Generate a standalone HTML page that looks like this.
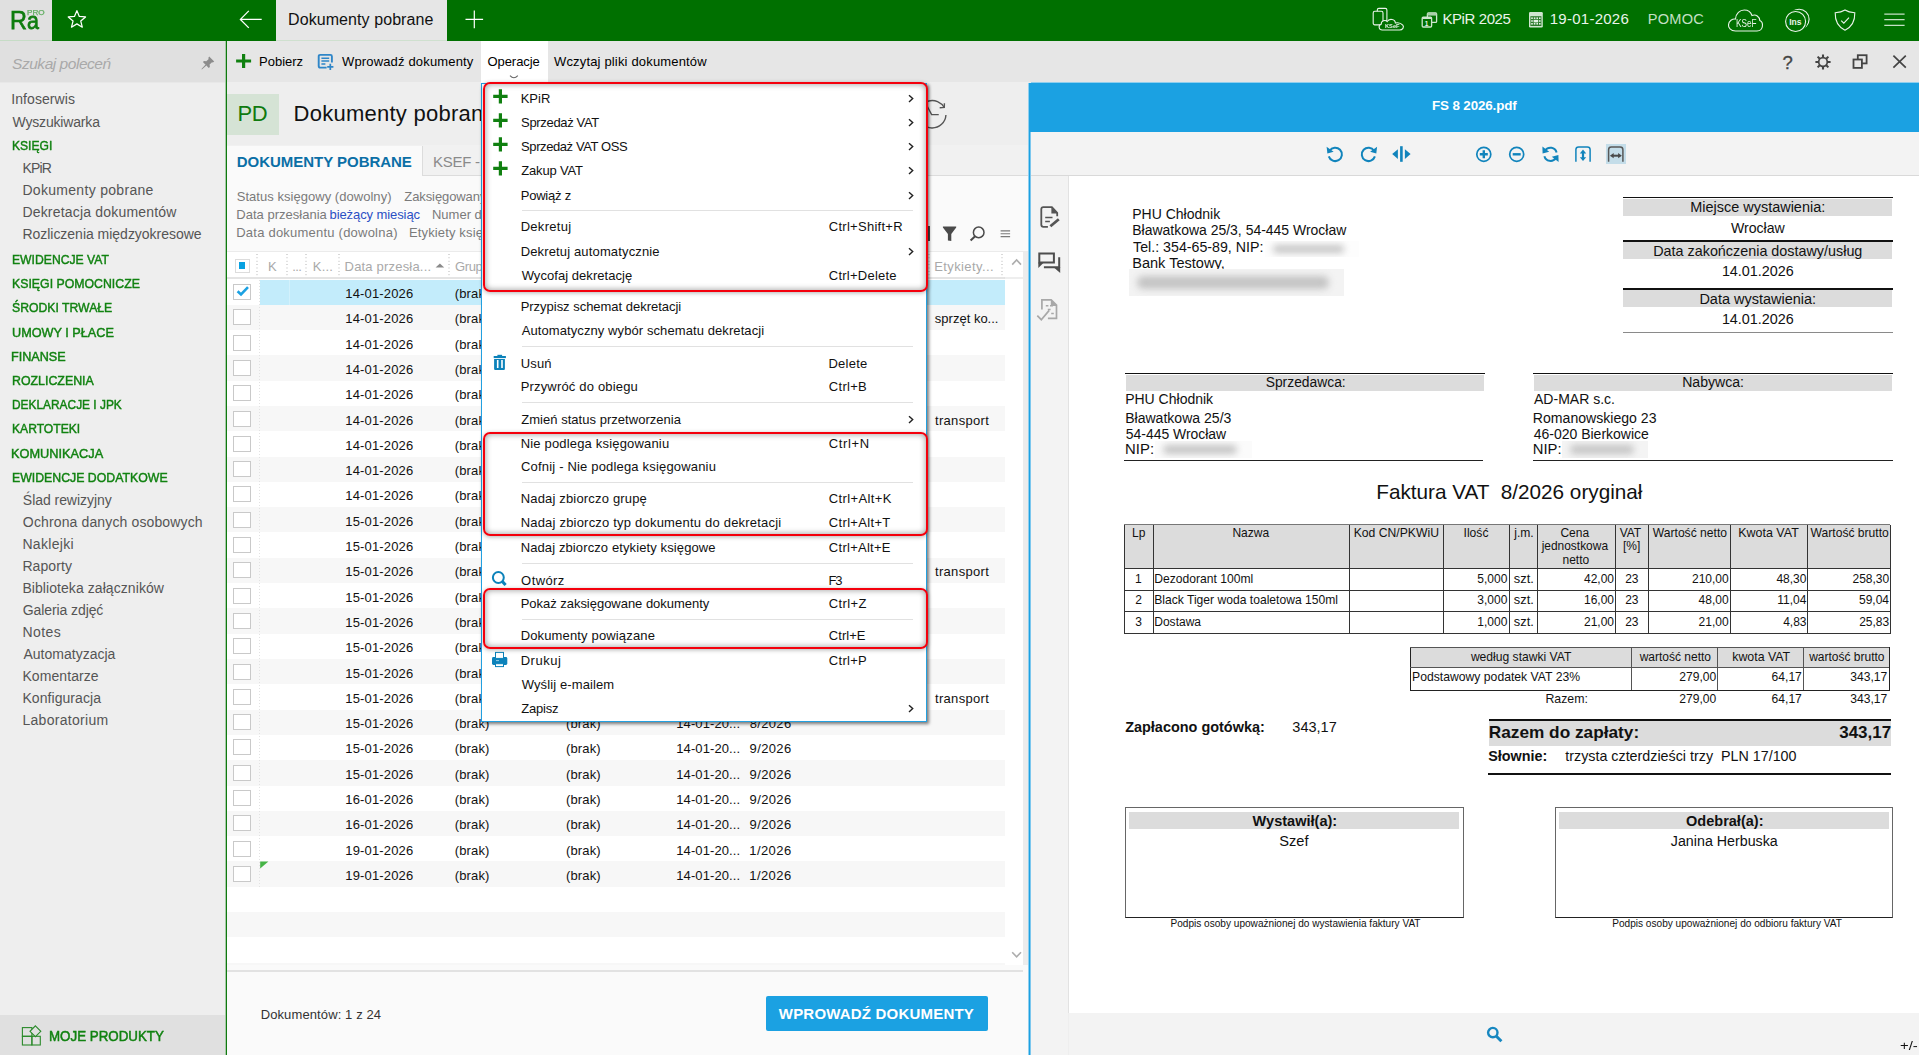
<!DOCTYPE html>
<html lang="pl"><head><meta charset="utf-8"><title>Dokumenty pobrane</title>
<style>
html,body{margin:0;padding:0;}
body{width:1919px;height:1055px;overflow:hidden;background:#eeeeee;font-family:"Liberation Sans",sans-serif;position:relative;}
.t{position:absolute;white-space:nowrap;color:#000;}
.r{position:absolute;}
svg{position:absolute;overflow:visible;}
</style></head><body>

<div class="r" style="left:0px;top:0px;width:1919px;height:41px;background:#007000;"></div>
<div class="r" style="left:0px;top:0px;width:52px;height:40px;background:#e0e0e0;"></div>
<div class="r" style="left:0px;top:40px;width:52px;height:1px;background:#c6dcc6;"></div>
<div class="r" style="left:276px;top:0px;width:171px;height:40px;background:#e6e6e6;"></div>
<div class="r" style="left:276px;top:40px;width:171px;height:1px;background:#cfe0cf;"></div>
<div class="r" style="left:0px;top:41px;width:225px;height:1014px;background:#eeeeee;"></div>
<div class="r" style="left:0px;top:41px;width:225px;height:41px;background:#e0e0e0;"></div>
<div class="r" style="left:0px;top:82px;width:225px;height:1px;background:#e8e8e8;"></div>
<div class="r" style="left:0px;top:1015px;width:225px;height:40px;background:#e0e0e0;"></div>
<div class="r" style="left:225px;top:41px;width:1px;height:1014px;background:#a5c8a5;"></div>
<div class="r" style="left:226px;top:41px;width:1px;height:1014px;background:#0f7a0f;"></div>
<div class="r" style="left:227px;top:41px;width:1692px;height:41px;background:#e6e6e6;"></div>
<div class="r" style="left:481px;top:41px;width:67px;height:42px;background:#ffffff;"></div>
<div class="r" style="left:227px;top:83px;width:803px;height:62px;background:#eeeeee;"></div>
<div class="r" style="left:227px;top:94px;width:52px;height:41px;background:#d5e3d5;"></div>
<div class="r" style="left:227px;top:145px;width:803px;height:31px;background:#f1f1f1;"></div>
<div class="r" style="left:227px;top:146px;width:196px;height:30px;background:#fafafa;"></div>
<div class="r" style="left:423px;top:175px;width:607px;height:1px;background:#dcdcdc;"></div>
<div class="r" style="left:422px;top:146px;width:1px;height:30px;background:#dcdcdc;"></div>
<div class="r" style="left:227px;top:176px;width:803px;height:77px;background:#fafafa;"></div>
<div class="r" style="left:227px;top:253px;width:778px;height:25px;background:#f4f4f4;"></div>
<div class="r" style="left:227px;top:277px;width:778px;height:2px;background:#e2e2e2;"></div>
<div class="r" style="left:227px;top:279px;width:796px;height:686px;background:#ffffff;"></div>
<div class="r" style="left:1023px;top:252px;width:5px;height:713px;background:#ececec;"></div>
<div class="r" style="left:227px;top:965px;width:803px;height:90px;background:#fafafa;"></div>
<div class="r" style="left:227px;top:970px;width:796px;height:2px;background:#e2e2e2;"></div>
<span class="t" style="left:12.07px;top:53.50px;font-size:15.5px;line-height:20px;letter-spacing:-0.468px;color:#a9a9a9;font-style:italic;">Szukaj poleceń</span>
<span class="t" style="left:11.24px;top:90.00px;font-size:14px;line-height:18px;letter-spacing:0.079px;color:#555555;">Infoserwis</span>
<span class="t" style="left:12.46px;top:113.00px;font-size:14px;line-height:18px;letter-spacing:-0.165px;color:#555555;">Wyszukiwarka</span>
<span class="t" style="left:11.53px;top:137.00px;font-size:13.4px;line-height:17px;color:#118211;-webkit-text-stroke:0.45px #118211;transform:scaleX(0.9019);transform-origin:0 0;">KSIĘGI</span>
<span class="t" style="left:22.38px;top:159.00px;font-size:14px;line-height:18px;letter-spacing:-0.795px;color:#555555;">KPiR</span>
<span class="t" style="left:22.38px;top:181.00px;font-size:14px;line-height:18px;letter-spacing:0.306px;color:#555555;">Dokumenty pobrane</span>
<span class="t" style="left:22.38px;top:203.00px;font-size:14px;line-height:18px;letter-spacing:0.195px;color:#555555;">Dekretacja dokumentów</span>
<span class="t" style="left:22.38px;top:225.00px;font-size:14px;line-height:18px;letter-spacing:-0.020px;color:#555555;">Rozliczenia międzyokresowe</span>
<span class="t" style="left:11.53px;top:251.00px;font-size:13.4px;line-height:17px;color:#118211;-webkit-text-stroke:0.45px #118211;transform:scaleX(0.9088);transform-origin:0 0;">EWIDENCJE VAT</span>
<span class="t" style="left:11.51px;top:275.00px;font-size:13.4px;line-height:17px;color:#118211;-webkit-text-stroke:0.45px #118211;transform:scaleX(0.9194);transform-origin:0 0;">KSIĘGI POMOCNICZE</span>
<span class="t" style="left:11.95px;top:299.00px;font-size:13.4px;line-height:17px;color:#118211;-webkit-text-stroke:0.45px #118211;transform:scaleX(0.9122);transform-origin:0 0;">ŚRODKI TRWAŁE</span>
<span class="t" style="left:11.55px;top:324.00px;font-size:13.4px;line-height:17px;color:#118211;-webkit-text-stroke:0.45px #118211;transform:scaleX(0.9467);transform-origin:0 0;">UMOWY I PŁACE</span>
<span class="t" style="left:11.49px;top:348.00px;font-size:13.4px;line-height:17px;color:#118211;-webkit-text-stroke:0.45px #118211;transform:scaleX(0.9425);transform-origin:0 0;">FINANSE</span>
<span class="t" style="left:11.51px;top:372.00px;font-size:13.4px;line-height:17px;color:#118211;-webkit-text-stroke:0.45px #118211;transform:scaleX(0.9234);transform-origin:0 0;">ROZLICZENIA</span>
<span class="t" style="left:11.55px;top:396.00px;font-size:13.4px;line-height:17px;color:#118211;-webkit-text-stroke:0.45px #118211;transform:scaleX(0.8888);transform-origin:0 0;">DEKLARACJE I JPK</span>
<span class="t" style="left:11.53px;top:420.00px;font-size:13.4px;line-height:17px;color:#118211;-webkit-text-stroke:0.45px #118211;transform:scaleX(0.9048);transform-origin:0 0;">KARTOTEKI</span>
<span class="t" style="left:11.48px;top:445.00px;font-size:13.4px;line-height:17px;color:#118211;-webkit-text-stroke:0.45px #118211;transform:scaleX(0.9529);transform-origin:0 0;">KOMUNIKACJA</span>
<span class="t" style="left:11.52px;top:469.00px;font-size:13.4px;line-height:17px;color:#118211;-webkit-text-stroke:0.45px #118211;transform:scaleX(0.9186);transform-origin:0 0;">EWIDENCJE DODATKOWE</span>
<span class="t" style="left:22.87px;top:491.00px;font-size:14px;line-height:18px;letter-spacing:-0.051px;color:#555555;">Ślad rewizyjny</span>
<span class="t" style="left:22.87px;top:513.00px;font-size:14px;line-height:18px;letter-spacing:0.133px;color:#555555;">Ochrona danych osobowych</span>
<span class="t" style="left:22.38px;top:535.00px;font-size:14px;line-height:18px;letter-spacing:0.319px;color:#555555;">Naklejki</span>
<span class="t" style="left:22.38px;top:557.00px;font-size:14px;line-height:18px;letter-spacing:0.098px;color:#555555;">Raporty</span>
<span class="t" style="left:22.38px;top:579.00px;font-size:14px;line-height:18px;letter-spacing:0.072px;color:#555555;">Biblioteka załączników</span>
<span class="t" style="left:22.80px;top:601.00px;font-size:14px;line-height:18px;letter-spacing:-0.095px;color:#555555;">Galeria zdjęć</span>
<span class="t" style="left:22.38px;top:623.00px;font-size:14px;line-height:18px;letter-spacing:0.459px;color:#555555;">Notes</span>
<span class="t" style="left:23.50px;top:645.00px;font-size:14px;line-height:18px;color:#555555;">Automatyzacja</span>
<span class="t" style="left:22.38px;top:667.00px;font-size:14px;line-height:18px;letter-spacing:0.084px;color:#555555;">Komentarze</span>
<span class="t" style="left:22.38px;top:689.00px;font-size:14px;line-height:18px;letter-spacing:0.071px;color:#555555;">Konfiguracja</span>
<span class="t" style="left:22.38px;top:711.00px;font-size:14px;line-height:18px;letter-spacing:0.303px;color:#555555;">Laboratorium</span>
<span class="t" style="left:48.73px;top:1027.00px;font-size:14px;line-height:18px;color:#118211;-webkit-text-stroke:0.5px #118211;transform:scaleX(0.9527);transform-origin:0 0;">MOJE PRODUKTY</span>
<span class="t" style="left:10.03px;top:3.00px;font-size:26.4px;line-height:34px;color:#0f7d0f;-webkit-text-stroke:0.75px #0f7d0f;transform:scaleX(0.8875);transform-origin:0 0;">R</span>
<span class="t" style="left:26.99px;top:6.00px;font-size:23.4px;line-height:30px;color:#0f7d0f;-webkit-text-stroke:0.8px #0f7d0f;transform:scaleX(0.9128);transform-origin:0 0;">a</span>
<span class="t" style="left:26.65px;top:8.50px;font-size:6.4px;line-height:8px;color:#62ae62;-webkit-text-stroke:0.25px #62ae62;transform:scaleX(1.2714);transform-origin:0 0;">PRO</span>
<svg style="left:67.1px;top:9.2px" width="19.8" height="19.8" viewBox="0 0 22 22"><path d="M11 1.8 L13.7 8.3 L20.6 8.8 L15.3 13.4 L17 20.2 L11 16.5 L5 20.2 L6.7 13.4 L1.4 8.8 L8.3 8.3 Z" fill="none" stroke="#fff" stroke-width="1.4" stroke-linejoin="round"/></svg>
<svg style="left:239px;top:9px" width="24" height="22" viewBox="0 0 24 22"><path d="M22.7 10.4 H1.6 M9.8 1.9 L1.4 10.4 L9.8 18.9" fill="none" stroke="#fff" stroke-width="1.3"/></svg>
<span class="t" style="left:288.02px;top:9.00px;font-size:16px;line-height:21px;letter-spacing:0.080px;color:#111;">Dokumenty pobrane</span>
<svg style="left:464px;top:9px" width="22" height="22" viewBox="0 0 22 22"><path d="M10.3 1.6 V19.2 M1.5 10.4 H19.1" fill="none" stroke="#fff" stroke-width="1.2"/></svg>
<svg style="left:1372px;top:7px" width="33" height="25" viewBox="0 0 33 25"><g fill="none" stroke="#eaf4ea" stroke-width="1.1"><rect x="5.3" y="1.4" width="9.6" height="13" rx="1.6"/><rect x="1.2" y="4.3" width="9.8" height="13.6" rx="1.6" fill="#007000"/><path d="M10.2 23 C6.6 23 6 18.2 9.2 17.2 C9 13.6 13.4 12.4 15.2 14.6 C17.2 11 23.2 12 23.4 16 C26.6 15.4 29.4 16.6 30.8 18.2 C32.4 20.2 30.6 23 27.6 23 Z" fill="#007000"/></g></svg>
<span class="t" style="left:1384.53px;top:22.00px;font-size:6px;line-height:8px;color:#eaf4ea;font-weight:bold;transform:scaleX(0.9504);transform-origin:0 0;">KSeF</span>
<svg style="left:1421px;top:11px" width="17" height="18" viewBox="0 0 17 18"><g fill="none" stroke="#cfe6cf" stroke-width="1.3"><rect x="6.4" y="2" width="9.2" height="9.4" rx="1"/><rect x="6.4" y="2" width="9.2" height="2.6" fill="#a8d0a8" stroke="none"/><rect x="1.2" y="6.2" width="9.4" height="9.8" rx="1" fill="#007000"/></g><rect x="1.2" y="6" width="9.4" height="2" fill="#cfe6cf"/></svg>
<span class="t" style="left:1424.79px;top:19.50px;font-size:6.5px;line-height:8px;color:#eaf4ea;font-weight:bold;">1</span>
<span class="t" style="left:1442.40px;top:8.50px;font-size:15px;line-height:20px;letter-spacing:-0.400px;color:#eaf4ea;">KPiR 2025</span>
<svg style="left:1528px;top:11px" width="16" height="18" viewBox="0 0 16 18"><rect x="1" y="1" width="13.8" height="15.4" rx="1.2" fill="#cfe6cf"/><rect x="2.4" y="5.2" width="11" height="9.8" fill="#2a7a2a"/><g fill="#e4f2e4"><rect x="3.2" y="6.4" width="1.6" height="1.6"/><rect x="5.8" y="6.4" width="1.6" height="1.6"/><rect x="8.4" y="6.4" width="1.6" height="1.6"/><rect x="11" y="6.4" width="1.6" height="1.6"/><rect x="3.2" y="9.2" width="1.6" height="1.6"/><rect x="5.6" y="8.8" width="4.6" height="2.6"/><rect x="11" y="9.2" width="1.6" height="1.6"/><rect x="3.2" y="12" width="1.6" height="1.6"/><rect x="5.8" y="12" width="1.6" height="1.6"/><rect x="8.4" y="12" width="1.6" height="1.6"/><rect x="11" y="12" width="1.6" height="1.6"/></g></svg>
<span class="t" style="left:1549.67px;top:8.50px;font-size:15px;line-height:20px;letter-spacing:0.271px;color:#eaf4ea;">19-01-2026</span>
<span class="t" style="left:1647.83px;top:9.50px;font-size:14.6px;line-height:19px;letter-spacing:0.191px;color:#c4e0c4;">POMOC</span>
<svg style="left:1727px;top:8px" width="38" height="25" viewBox="0 0 38 25"><path d="M8.5 23 C3.5 23 1.2 19.5 1.5 16.8 C1.8 13 5.5 10.5 8.5 11 C8.8 5.5 13 2 17.2 2 C21 2 24 4.5 25 7.5 C29 6 32.5 8.5 32.8 12.5 C36.5 14 37 22.8 30 23 Z" fill="none" stroke="#eaf4ea" stroke-width="1.1"/></svg>
<span class="t" style="left:1736.04px;top:16.00px;font-size:10.6px;line-height:14px;color:#eaf4ea;transform:scaleX(0.7761);transform-origin:0 0;">KSeF</span>
<svg style="left:1784px;top:7px" width="28" height="27" viewBox="0 0 28 27"><g fill="none" stroke="#eaf4ea" stroke-width="1.1"><circle cx="15.1" cy="12.2" r="10"/><circle cx="11.6" cy="14.5" r="10" fill="#007000" stroke="#007000" stroke-width="3.2"/><circle cx="11.6" cy="14.5" r="10"/></g></svg>
<span class="t" style="left:1789.25px;top:16.50px;font-size:8.5px;line-height:11px;letter-spacing:-0.045px;color:#eaf4ea;font-weight:bold;">Ins</span>
<svg style="left:1833px;top:8px" width="24" height="24" viewBox="0 0 24 24"><g fill="none" stroke="#eaf4ea" stroke-width="1.1"><path d="M12 2 C9 4 5.4 4.6 2.2 4.8 C2 12 4.4 18.6 12 22.2 C19.6 18.6 22 12 21.8 4.8 C18.6 4.6 15 4 12 2 Z"/><path d="M8.2 12.6 L10.8 15.2 L16 9.6"/></g></svg>
<svg style="left:1884px;top:12px" width="22" height="16" viewBox="0 0 22 16"><path d="M0.3 2.1 H20.6 M0.3 7.7 H20.6 M0.3 13.4 H20.6" stroke="#c4e0c4" stroke-width="1.3" fill="none"/></svg>
<svg style="left:201px;top:56px" width="14" height="14" viewBox="0 0 14 14"><g fill="#8c8c8c"><path d="M8.2 0.6 L13.2 5.6 L11.9 6.6 L11 6.2 L8.6 8.6 L8.9 10.9 L7.8 12 L1.9 6.1 L3 5 L5.3 5.3 L7.7 2.9 L7.3 2 Z"/><path d="M4.6 8.6 L5.4 9.4 L0.9 13.4 L0.5 13 Z"/></g></svg>
<svg style="left:21px;top:1025px" width="22" height="22" viewBox="0 0 22 22"><g fill="none" stroke="#2a8a2a" stroke-width="1.1"><rect x="1.4" y="2.6" width="9.5" height="8.7"/><rect x="1.4" y="11.3" width="9.5" height="8.7"/><rect x="10.9" y="11.3" width="8.4" height="8.7"/><path d="M14.4 0.9 L19.8 6.3 L14.4 11.7 L9 6.3 Z" fill="#e0e0e0"/></g></svg>
<svg style="left:236px;top:54px" width="16" height="15" viewBox="0 0 16 15"><path d="M7.6 0 V14 M0.1 7 H15.1" stroke="#108010" stroke-width="3.2" fill="none"/></svg>
<span class="t" style="left:258.96px;top:53.00px;font-size:13px;line-height:17px;letter-spacing:0.015px;">Pobierz</span>
<svg style="left:317px;top:53px" width="18" height="18" viewBox="0 0 18 18"><g fill="none" stroke="#2f86c8" stroke-width="1.9"><path d="M9.6 14.6 H3.2 Q1.7 14.6 1.7 13.1 V3.4 Q1.7 1.9 3.2 1.9 H13.4 Q14.9 1.9 14.9 3.4 V9.4"/><path d="M4.4 5.3 H12.2 M4.4 8.1 H12.2 M4.4 10.9 H8.4" stroke-width="1.5"/><path d="M13.3 10.8 V17 M10.2 13.9 H16.4" stroke-width="1.7"/></g></svg>
<span class="t" style="left:341.97px;top:53.00px;font-size:13px;line-height:17px;letter-spacing:0.161px;">Wprowadź dokumenty</span>
<span class="t" style="left:487.42px;top:53.00px;font-size:13px;line-height:17px;letter-spacing:-0.044px;">Operacje</span>
<svg style="left:509px;top:74.6px" width="10" height="5" viewBox="0 0 10 5"><path d="M1 0.6 Q4.9 4.8 8.8 0.6" fill="none" stroke="#666" stroke-width="1.1"/></svg>
<span class="t" style="left:553.97px;top:53.00px;font-size:13px;line-height:17px;letter-spacing:0.167px;">Wczytaj pliki dokumentów</span>
<span class="t" style="left:1782.56px;top:50.50px;font-size:18.5px;line-height:24px;color:#444;-webkit-text-stroke:0.3px #444;">?</span>
<svg style="left:1813.7px;top:52.6px" width="18" height="18" viewBox="0 0 18 18"><circle cx="9" cy="9" r="4.3" fill="none" stroke="#444" stroke-width="1.7"/><path d="M9.00 13.60 L9.00 16.60 M5.75 12.25 L3.63 14.37 M4.40 9.00 L1.40 9.00 M5.75 5.75 L3.63 3.63 M9.00 4.40 L9.00 1.40 M12.25 5.75 L14.37 3.63 M13.60 9.00 L16.60 9.00 M12.25 12.25 L14.37 14.37 " stroke="#444" stroke-width="2.1" fill="none"/></svg>
<svg style="left:1852px;top:54px" width="17" height="16" viewBox="0 0 17 16"><g fill="none" stroke="#444" stroke-width="1.8"><rect x="5.8" y="1.2" width="8.8" height="8.2"/><rect x="1.5" y="5.5" width="8.4" height="8.4" fill="#e6e6e6"/></g></svg>
<svg style="left:1892px;top:54px" width="16" height="16" viewBox="0 0 16 16"><path d="M1.4 1.6 L13.8 13.6 M13.8 1.6 L1.4 13.6" stroke="#444" stroke-width="1.7" fill="none"/></svg>
<span class="t" style="left:237.54px;top:99.00px;font-size:22px;line-height:29px;letter-spacing:-0.375px;color:#0f7a0f;">PD</span>
<span class="t" style="left:293.54px;top:99.00px;font-size:22px;line-height:29px;letter-spacing:0.255px;color:#111;">Dokumenty pobrane</span>
<svg style="left:915px;top:88px" width="34" height="44" viewBox="0 0 34 44"><g fill="none" stroke="#555" stroke-width="1.4"><path d="M3.45 26.25 A13.75 13.75 0 0 1 29.17 19.48"/><path d="M30.93 26.97 A13.75 13.75 0 0 1 3.45 26.25"/><path d="M24.7 19.7 L29.3 19.4 L29.4 15.3"/><path d="M23.75 26.6 H16.6 L12.5 18.75"/></g></svg>
<span class="t" style="left:236.72px;top:151.50px;font-size:15px;line-height:20px;letter-spacing:-0.027px;color:#0b6fa6;font-weight:bold;">DOKUMENTY POBRANE</span>
<span class="t" style="left:433.10px;top:151.50px;font-size:15px;line-height:20px;letter-spacing:-0.286px;color:#8a8a8a;">KSEF - pobrane</span>
<span class="t" style="left:236.72px;top:188.00px;font-size:13px;line-height:17px;letter-spacing:0.037px;color:#7a7a7a;">Status księgowy (dowolny)</span>
<span class="t" style="left:404.31px;top:188.00px;font-size:13px;line-height:17px;letter-spacing:-0.090px;color:#7a7a7a;">Zaksięgowany (dowolny)</span>
<span class="t" style="left:236.26px;top:206.00px;font-size:13px;line-height:17px;letter-spacing:0.014px;color:#7a7a7a;">Data przesłania</span>
<span class="t" style="left:329.49px;top:206.00px;font-size:13px;line-height:17px;letter-spacing:-0.086px;color:#2a4fc4;">bieżący miesiąc</span>
<span class="t" style="left:431.96px;top:206.00px;font-size:13px;line-height:17px;color:#7a7a7a;">Numer dokumentu</span>
<span class="t" style="left:236.26px;top:224.00px;font-size:13px;line-height:17px;letter-spacing:0.223px;color:#7a7a7a;">Data dokumentu (dowolna)</span>
<span class="t" style="left:408.96px;top:224.00px;font-size:13px;line-height:17px;letter-spacing:0.142px;color:#7a7a7a;">Etykiety księgowe</span>
<div class="r" style="left:227px;top:251px;width:803px;height:1px;background:#ebebeb;"></div>
<div class="r" style="left:227px;top:252px;width:796px;height:25px;background:#ffffff;"></div>
<div class="r" style="left:227px;top:277px;width:777px;height:2px;background:#e4e4e4;"></div>
<div class="r" style="left:235px;top:259px;width:13px;height:12px;background:#ffffff;border:1px solid #dcdcdc;box-sizing:content-box;"></div>
<div class="r" style="left:239px;top:262px;width:6px;height:7px;background:#08a1e1;"></div>
<div class="r" style="left:256px;top:254px;width:2px;height:22px;background-image:linear-gradient(#d4d4d4 1px,transparent 1px);background-size:2px 3.4px;"></div>
<div class="r" style="left:286px;top:254px;width:2px;height:22px;background-image:linear-gradient(#d4d4d4 1px,transparent 1px);background-size:2px 3.4px;"></div>
<div class="r" style="left:305px;top:254px;width:2px;height:22px;background-image:linear-gradient(#d4d4d4 1px,transparent 1px);background-size:2px 3.4px;"></div>
<div class="r" style="left:338px;top:254px;width:2px;height:22px;background-image:linear-gradient(#d4d4d4 1px,transparent 1px);background-size:2px 3.4px;"></div>
<div class="r" style="left:448px;top:254px;width:2px;height:22px;background-image:linear-gradient(#d4d4d4 1px,transparent 1px);background-size:2px 3.4px;"></div>
<div class="r" style="left:928px;top:254px;width:2px;height:22px;background-image:linear-gradient(#d4d4d4 1px,transparent 1px);background-size:2px 3.4px;"></div>
<div class="r" style="left:1001px;top:254px;width:2px;height:22px;background-image:linear-gradient(#d4d4d4 1px,transparent 1px);background-size:2px 3.4px;"></div>
<span class="t" style="left:267.96px;top:258.00px;font-size:13px;line-height:17px;color:#a9a9a9;">K</span>
<span class="t" style="left:292.13px;top:258.00px;font-size:13px;line-height:17px;letter-spacing:-0.491px;color:#a9a9a9;">...</span>
<span class="t" style="left:312.76px;top:258.00px;font-size:13px;line-height:17px;letter-spacing:0.237px;color:#a9a9a9;">K...</span>
<span class="t" style="left:344.56px;top:258.00px;font-size:13px;line-height:17px;letter-spacing:0.192px;color:#a9a9a9;">Data przesła...</span>
<svg style="left:435px;top:263px" width="10" height="5" viewBox="0 0 10 5"><path d="M0.6 4.6 L4.9 0.4 L9.2 4.6 Z" fill="#8a8a8a"/></svg>
<span class="t" style="left:454.95px;top:258.00px;font-size:13px;line-height:17px;letter-spacing:-0.373px;color:#a9a9a9;">Grupa</span>
<span class="t" style="left:566.54px;top:258.00px;font-size:13px;line-height:17px;letter-spacing:-0.325px;color:#a9a9a9;">Typ dok...</span>
<span class="t" style="left:676.16px;top:258.00px;font-size:13px;line-height:17px;letter-spacing:-0.265px;color:#a9a9a9;">Data dok...</span>
<span class="t" style="left:749.16px;top:258.00px;font-size:13px;line-height:17px;letter-spacing:0.059px;color:#a9a9a9;">Numer</span>
<span class="t" style="left:934.16px;top:258.00px;font-size:13px;line-height:17px;letter-spacing:0.403px;color:#a9a9a9;">Etykiety...</span>
<svg style="left:1011px;top:258px" width="12" height="8" viewBox="0 0 12 8"><path d="M1.2 6.6 L5.6 1.9 L10 6.6" fill="none" stroke="#adadad" stroke-width="1.6"/></svg>
<svg style="left:1011px;top:951px" width="12" height="8" viewBox="0 0 12 8"><path d="M1.2 1.2 L5.6 5.9 L10 1.2" fill="none" stroke="#adadad" stroke-width="1.6"/></svg>
<div class="r" style="left:260px;top:280px;width:745px;height:25px;background:#c3ecfb;"></div>
<div class="r" style="left:289px;top:280px;width:1px;height:25px;background:#d3f1fc;"></div>
<div class="r" style="left:233px;top:284px;width:16px;height:14px;background:#ffffff;border:1px solid #c9c9c9;"></div>
<span class="t" style="left:345.32px;top:285.00px;font-size:13px;line-height:17px;letter-spacing:0.159px;color:#111;">14-01-2026</span>
<span class="t" style="left:454.82px;top:285.00px;font-size:13px;line-height:17px;letter-spacing:0.126px;color:#111;">(brak)</span>
<span class="t" style="left:566.02px;top:285.00px;font-size:13px;line-height:17px;letter-spacing:0.126px;color:#111;">(brak)</span>
<span class="t" style="left:676.23px;top:285.00px;font-size:13px;line-height:17px;letter-spacing:0.106px;color:#111;">14-01-20...</span>
<span class="t" style="left:749.23px;top:285.00px;font-size:13px;line-height:17px;letter-spacing:0.436px;color:#111;">1/2026</span>
<div class="r" style="left:227px;top:305px;width:778px;height:25px;background:#f7f7f7;"></div>
<div class="r" style="left:233px;top:309px;width:16px;height:14px;background:#ffffff;border:1px solid #c9c9c9;"></div>
<span class="t" style="left:345.32px;top:310.00px;font-size:13px;line-height:17px;letter-spacing:0.159px;color:#111;">14-01-2026</span>
<span class="t" style="left:454.82px;top:310.00px;font-size:13px;line-height:17px;letter-spacing:0.126px;color:#111;">(brak)</span>
<span class="t" style="left:566.02px;top:310.00px;font-size:13px;line-height:17px;letter-spacing:0.126px;color:#111;">(brak)</span>
<span class="t" style="left:676.23px;top:310.00px;font-size:13px;line-height:17px;letter-spacing:0.106px;color:#111;">14-01-20...</span>
<span class="t" style="left:749.55px;top:310.00px;font-size:13px;line-height:17px;letter-spacing:0.371px;color:#111;">2/2026</span>
<span class="t" style="left:934.84px;top:310.00px;font-size:13px;line-height:17px;letter-spacing:0.005px;color:#111;">sprzęt ko...</span>
<div class="r" style="left:233px;top:335px;width:16px;height:14px;background:#ffffff;border:1px solid #c9c9c9;"></div>
<span class="t" style="left:345.32px;top:336.00px;font-size:13px;line-height:17px;letter-spacing:0.159px;color:#111;">14-01-2026</span>
<span class="t" style="left:454.82px;top:336.00px;font-size:13px;line-height:17px;letter-spacing:0.126px;color:#111;">(brak)</span>
<span class="t" style="left:566.02px;top:336.00px;font-size:13px;line-height:17px;letter-spacing:0.126px;color:#111;">(brak)</span>
<span class="t" style="left:676.23px;top:336.00px;font-size:13px;line-height:17px;letter-spacing:0.106px;color:#111;">14-01-20...</span>
<span class="t" style="left:749.71px;top:336.00px;font-size:13px;line-height:17px;letter-spacing:0.338px;color:#111;">3/2026</span>
<div class="r" style="left:227px;top:355px;width:778px;height:26px;background:#f7f7f7;"></div>
<div class="r" style="left:233px;top:360px;width:16px;height:14px;background:#ffffff;border:1px solid #c9c9c9;"></div>
<span class="t" style="left:345.32px;top:361.00px;font-size:13px;line-height:17px;letter-spacing:0.159px;color:#111;">14-01-2026</span>
<span class="t" style="left:454.82px;top:361.00px;font-size:13px;line-height:17px;letter-spacing:0.126px;color:#111;">(brak)</span>
<span class="t" style="left:566.02px;top:361.00px;font-size:13px;line-height:17px;letter-spacing:0.126px;color:#111;">(brak)</span>
<span class="t" style="left:676.23px;top:361.00px;font-size:13px;line-height:17px;letter-spacing:0.106px;color:#111;">14-01-20...</span>
<span class="t" style="left:749.71px;top:361.00px;font-size:13px;line-height:17px;letter-spacing:0.338px;color:#111;">3/2026</span>
<div class="r" style="left:233px;top:385px;width:16px;height:14px;background:#ffffff;border:1px solid #c9c9c9;"></div>
<span class="t" style="left:345.32px;top:386.00px;font-size:13px;line-height:17px;letter-spacing:0.159px;color:#111;">14-01-2026</span>
<span class="t" style="left:454.82px;top:386.00px;font-size:13px;line-height:17px;letter-spacing:0.126px;color:#111;">(brak)</span>
<span class="t" style="left:566.02px;top:386.00px;font-size:13px;line-height:17px;letter-spacing:0.126px;color:#111;">(brak)</span>
<span class="t" style="left:676.23px;top:386.00px;font-size:13px;line-height:17px;letter-spacing:0.106px;color:#111;">14-01-20...</span>
<span class="t" style="left:749.91px;top:386.00px;font-size:13px;line-height:17px;letter-spacing:0.299px;color:#111;">4/2026</span>
<div class="r" style="left:227px;top:406px;width:778px;height:25px;background:#f7f7f7;"></div>
<div class="r" style="left:233px;top:411px;width:16px;height:14px;background:#ffffff;border:1px solid #c9c9c9;"></div>
<span class="t" style="left:345.32px;top:412.00px;font-size:13px;line-height:17px;letter-spacing:0.159px;color:#111;">14-01-2026</span>
<span class="t" style="left:454.82px;top:412.00px;font-size:13px;line-height:17px;letter-spacing:0.126px;color:#111;">(brak)</span>
<span class="t" style="left:566.02px;top:412.00px;font-size:13px;line-height:17px;letter-spacing:0.126px;color:#111;">(brak)</span>
<span class="t" style="left:676.23px;top:412.00px;font-size:13px;line-height:17px;letter-spacing:0.106px;color:#111;">14-01-20...</span>
<span class="t" style="left:749.68px;top:412.00px;font-size:13px;line-height:17px;letter-spacing:0.345px;color:#111;">5/2026</span>
<span class="t" style="left:935.00px;top:412.00px;font-size:13px;line-height:17px;letter-spacing:0.309px;color:#111;">transport</span>
<div class="r" style="left:233px;top:436px;width:16px;height:14px;background:#ffffff;border:1px solid #c9c9c9;"></div>
<span class="t" style="left:345.32px;top:437.00px;font-size:13px;line-height:17px;letter-spacing:0.159px;color:#111;">14-01-2026</span>
<span class="t" style="left:454.82px;top:437.00px;font-size:13px;line-height:17px;letter-spacing:0.126px;color:#111;">(brak)</span>
<span class="t" style="left:566.02px;top:437.00px;font-size:13px;line-height:17px;letter-spacing:0.126px;color:#111;">(brak)</span>
<span class="t" style="left:676.23px;top:437.00px;font-size:13px;line-height:17px;letter-spacing:0.106px;color:#111;">14-01-20...</span>
<span class="t" style="left:749.68px;top:437.00px;font-size:13px;line-height:17px;letter-spacing:0.345px;color:#111;">5/2026</span>
<div class="r" style="left:227px;top:457px;width:778px;height:25px;background:#f7f7f7;"></div>
<div class="r" style="left:233px;top:461px;width:16px;height:14px;background:#ffffff;border:1px solid #c9c9c9;"></div>
<span class="t" style="left:345.32px;top:462.00px;font-size:13px;line-height:17px;letter-spacing:0.159px;color:#111;">14-01-2026</span>
<span class="t" style="left:454.82px;top:462.00px;font-size:13px;line-height:17px;letter-spacing:0.126px;color:#111;">(brak)</span>
<span class="t" style="left:566.02px;top:462.00px;font-size:13px;line-height:17px;letter-spacing:0.126px;color:#111;">(brak)</span>
<span class="t" style="left:676.23px;top:462.00px;font-size:13px;line-height:17px;letter-spacing:0.106px;color:#111;">14-01-20...</span>
<span class="t" style="left:749.55px;top:462.00px;font-size:13px;line-height:17px;letter-spacing:0.371px;color:#111;">6/2026</span>
<div class="r" style="left:233px;top:486px;width:16px;height:14px;background:#ffffff;border:1px solid #c9c9c9;"></div>
<span class="t" style="left:345.32px;top:487.00px;font-size:13px;line-height:17px;letter-spacing:0.159px;color:#111;">14-01-2026</span>
<span class="t" style="left:454.82px;top:487.00px;font-size:13px;line-height:17px;letter-spacing:0.126px;color:#111;">(brak)</span>
<span class="t" style="left:566.02px;top:487.00px;font-size:13px;line-height:17px;letter-spacing:0.126px;color:#111;">(brak)</span>
<span class="t" style="left:676.23px;top:487.00px;font-size:13px;line-height:17px;letter-spacing:0.106px;color:#111;">14-01-20...</span>
<span class="t" style="left:749.55px;top:487.00px;font-size:13px;line-height:17px;letter-spacing:0.371px;color:#111;">6/2026</span>
<div class="r" style="left:227px;top:507px;width:778px;height:25px;background:#f7f7f7;"></div>
<div class="r" style="left:233px;top:512px;width:16px;height:14px;background:#ffffff;border:1px solid #c9c9c9;"></div>
<span class="t" style="left:345.32px;top:513.00px;font-size:13px;line-height:17px;letter-spacing:0.159px;color:#111;">15-01-2026</span>
<span class="t" style="left:454.82px;top:513.00px;font-size:13px;line-height:17px;letter-spacing:0.126px;color:#111;">(brak)</span>
<span class="t" style="left:566.02px;top:513.00px;font-size:13px;line-height:17px;letter-spacing:0.126px;color:#111;">(brak)</span>
<span class="t" style="left:676.23px;top:513.00px;font-size:13px;line-height:17px;letter-spacing:0.106px;color:#111;">14-01-20...</span>
<span class="t" style="left:749.55px;top:513.00px;font-size:13px;line-height:17px;letter-spacing:0.371px;color:#111;">7/2026</span>
<div class="r" style="left:233px;top:537px;width:16px;height:14px;background:#ffffff;border:1px solid #c9c9c9;"></div>
<span class="t" style="left:345.32px;top:538.00px;font-size:13px;line-height:17px;letter-spacing:0.159px;color:#111;">15-01-2026</span>
<span class="t" style="left:454.82px;top:538.00px;font-size:13px;line-height:17px;letter-spacing:0.126px;color:#111;">(brak)</span>
<span class="t" style="left:566.02px;top:538.00px;font-size:13px;line-height:17px;letter-spacing:0.126px;color:#111;">(brak)</span>
<span class="t" style="left:676.23px;top:538.00px;font-size:13px;line-height:17px;letter-spacing:0.106px;color:#111;">14-01-20...</span>
<span class="t" style="left:749.55px;top:538.00px;font-size:13px;line-height:17px;letter-spacing:0.371px;color:#111;">7/2026</span>
<div class="r" style="left:227px;top:558px;width:778px;height:25px;background:#f7f7f7;"></div>
<div class="r" style="left:233px;top:562px;width:16px;height:14px;background:#ffffff;border:1px solid #c9c9c9;"></div>
<span class="t" style="left:345.32px;top:563.00px;font-size:13px;line-height:17px;letter-spacing:0.159px;color:#111;">15-01-2026</span>
<span class="t" style="left:454.82px;top:563.00px;font-size:13px;line-height:17px;letter-spacing:0.126px;color:#111;">(brak)</span>
<span class="t" style="left:566.02px;top:563.00px;font-size:13px;line-height:17px;letter-spacing:0.126px;color:#111;">(brak)</span>
<span class="t" style="left:676.23px;top:563.00px;font-size:13px;line-height:17px;letter-spacing:0.106px;color:#111;">14-01-20...</span>
<span class="t" style="left:749.55px;top:563.00px;font-size:13px;line-height:17px;letter-spacing:0.371px;color:#111;">7/2026</span>
<span class="t" style="left:935.00px;top:563.00px;font-size:13px;line-height:17px;letter-spacing:0.309px;color:#111;">transport</span>
<div class="r" style="left:233px;top:588px;width:16px;height:14px;background:#ffffff;border:1px solid #c9c9c9;"></div>
<span class="t" style="left:345.32px;top:589.00px;font-size:13px;line-height:17px;letter-spacing:0.159px;color:#111;">15-01-2026</span>
<span class="t" style="left:454.82px;top:589.00px;font-size:13px;line-height:17px;letter-spacing:0.126px;color:#111;">(brak)</span>
<span class="t" style="left:566.02px;top:589.00px;font-size:13px;line-height:17px;letter-spacing:0.126px;color:#111;">(brak)</span>
<span class="t" style="left:676.23px;top:589.00px;font-size:13px;line-height:17px;letter-spacing:0.106px;color:#111;">14-01-20...</span>
<span class="t" style="left:749.65px;top:589.00px;font-size:13px;line-height:17px;letter-spacing:0.352px;color:#111;">8/2026</span>
<div class="r" style="left:227px;top:608px;width:778px;height:26px;background:#f7f7f7;"></div>
<div class="r" style="left:233px;top:613px;width:16px;height:14px;background:#ffffff;border:1px solid #c9c9c9;"></div>
<span class="t" style="left:345.32px;top:614.00px;font-size:13px;line-height:17px;letter-spacing:0.159px;color:#111;">15-01-2026</span>
<span class="t" style="left:454.82px;top:614.00px;font-size:13px;line-height:17px;letter-spacing:0.126px;color:#111;">(brak)</span>
<span class="t" style="left:566.02px;top:614.00px;font-size:13px;line-height:17px;letter-spacing:0.126px;color:#111;">(brak)</span>
<span class="t" style="left:676.23px;top:614.00px;font-size:13px;line-height:17px;letter-spacing:0.106px;color:#111;">14-01-20...</span>
<span class="t" style="left:749.65px;top:614.00px;font-size:13px;line-height:17px;letter-spacing:0.352px;color:#111;">8/2026</span>
<div class="r" style="left:233px;top:638px;width:16px;height:14px;background:#ffffff;border:1px solid #c9c9c9;"></div>
<span class="t" style="left:345.32px;top:639.00px;font-size:13px;line-height:17px;letter-spacing:0.159px;color:#111;">15-01-2026</span>
<span class="t" style="left:454.82px;top:639.00px;font-size:13px;line-height:17px;letter-spacing:0.126px;color:#111;">(brak)</span>
<span class="t" style="left:566.02px;top:639.00px;font-size:13px;line-height:17px;letter-spacing:0.126px;color:#111;">(brak)</span>
<span class="t" style="left:676.23px;top:639.00px;font-size:13px;line-height:17px;letter-spacing:0.106px;color:#111;">14-01-20...</span>
<span class="t" style="left:749.65px;top:639.00px;font-size:13px;line-height:17px;letter-spacing:0.352px;color:#111;">8/2026</span>
<div class="r" style="left:227px;top:659px;width:778px;height:25px;background:#f7f7f7;"></div>
<div class="r" style="left:233px;top:664px;width:16px;height:14px;background:#ffffff;border:1px solid #c9c9c9;"></div>
<span class="t" style="left:345.32px;top:665.00px;font-size:13px;line-height:17px;letter-spacing:0.159px;color:#111;">15-01-2026</span>
<span class="t" style="left:454.82px;top:665.00px;font-size:13px;line-height:17px;letter-spacing:0.126px;color:#111;">(brak)</span>
<span class="t" style="left:566.02px;top:665.00px;font-size:13px;line-height:17px;letter-spacing:0.126px;color:#111;">(brak)</span>
<span class="t" style="left:676.23px;top:665.00px;font-size:13px;line-height:17px;letter-spacing:0.106px;color:#111;">14-01-20...</span>
<span class="t" style="left:749.65px;top:665.00px;font-size:13px;line-height:17px;letter-spacing:0.352px;color:#111;">8/2026</span>
<div class="r" style="left:233px;top:689px;width:16px;height:14px;background:#ffffff;border:1px solid #c9c9c9;"></div>
<span class="t" style="left:345.32px;top:690.00px;font-size:13px;line-height:17px;letter-spacing:0.159px;color:#111;">15-01-2026</span>
<span class="t" style="left:454.82px;top:690.00px;font-size:13px;line-height:17px;letter-spacing:0.126px;color:#111;">(brak)</span>
<span class="t" style="left:566.02px;top:690.00px;font-size:13px;line-height:17px;letter-spacing:0.126px;color:#111;">(brak)</span>
<span class="t" style="left:676.23px;top:690.00px;font-size:13px;line-height:17px;letter-spacing:0.106px;color:#111;">14-01-20...</span>
<span class="t" style="left:749.65px;top:690.00px;font-size:13px;line-height:17px;letter-spacing:0.352px;color:#111;">8/2026</span>
<span class="t" style="left:935.00px;top:690.00px;font-size:13px;line-height:17px;letter-spacing:0.309px;color:#111;">transport</span>
<div class="r" style="left:227px;top:710px;width:778px;height:25px;background:#f7f7f7;"></div>
<div class="r" style="left:233px;top:714px;width:16px;height:14px;background:#ffffff;border:1px solid #c9c9c9;"></div>
<span class="t" style="left:345.32px;top:715.00px;font-size:13px;line-height:17px;letter-spacing:0.159px;color:#111;">15-01-2026</span>
<span class="t" style="left:454.82px;top:715.00px;font-size:13px;line-height:17px;letter-spacing:0.126px;color:#111;">(brak)</span>
<span class="t" style="left:566.02px;top:715.00px;font-size:13px;line-height:17px;letter-spacing:0.126px;color:#111;">(brak)</span>
<span class="t" style="left:676.23px;top:715.00px;font-size:13px;line-height:17px;letter-spacing:0.106px;color:#111;">14-01-20...</span>
<span class="t" style="left:749.65px;top:715.00px;font-size:13px;line-height:17px;letter-spacing:0.352px;color:#111;">8/2026</span>
<div class="r" style="left:233px;top:739px;width:16px;height:14px;background:#ffffff;border:1px solid #c9c9c9;"></div>
<span class="t" style="left:345.32px;top:740.00px;font-size:13px;line-height:17px;letter-spacing:0.159px;color:#111;">15-01-2026</span>
<span class="t" style="left:454.82px;top:740.00px;font-size:13px;line-height:17px;letter-spacing:0.126px;color:#111;">(brak)</span>
<span class="t" style="left:566.02px;top:740.00px;font-size:13px;line-height:17px;letter-spacing:0.126px;color:#111;">(brak)</span>
<span class="t" style="left:676.23px;top:740.00px;font-size:13px;line-height:17px;letter-spacing:0.106px;color:#111;">14-01-20...</span>
<span class="t" style="left:749.62px;top:740.00px;font-size:13px;line-height:17px;letter-spacing:0.358px;color:#111;">9/2026</span>
<div class="r" style="left:227px;top:760px;width:778px;height:26px;background:#f7f7f7;"></div>
<div class="r" style="left:233px;top:765px;width:16px;height:14px;background:#ffffff;border:1px solid #c9c9c9;"></div>
<span class="t" style="left:345.32px;top:766.00px;font-size:13px;line-height:17px;letter-spacing:0.159px;color:#111;">15-01-2026</span>
<span class="t" style="left:454.82px;top:766.00px;font-size:13px;line-height:17px;letter-spacing:0.126px;color:#111;">(brak)</span>
<span class="t" style="left:566.02px;top:766.00px;font-size:13px;line-height:17px;letter-spacing:0.126px;color:#111;">(brak)</span>
<span class="t" style="left:676.23px;top:766.00px;font-size:13px;line-height:17px;letter-spacing:0.106px;color:#111;">14-01-20...</span>
<span class="t" style="left:749.62px;top:766.00px;font-size:13px;line-height:17px;letter-spacing:0.358px;color:#111;">9/2026</span>
<div class="r" style="left:233px;top:790px;width:16px;height:14px;background:#ffffff;border:1px solid #c9c9c9;"></div>
<span class="t" style="left:345.32px;top:791.00px;font-size:13px;line-height:17px;letter-spacing:0.159px;color:#111;">16-01-2026</span>
<span class="t" style="left:454.82px;top:791.00px;font-size:13px;line-height:17px;letter-spacing:0.126px;color:#111;">(brak)</span>
<span class="t" style="left:566.02px;top:791.00px;font-size:13px;line-height:17px;letter-spacing:0.126px;color:#111;">(brak)</span>
<span class="t" style="left:676.23px;top:791.00px;font-size:13px;line-height:17px;letter-spacing:0.106px;color:#111;">14-01-20...</span>
<span class="t" style="left:749.62px;top:791.00px;font-size:13px;line-height:17px;letter-spacing:0.358px;color:#111;">9/2026</span>
<div class="r" style="left:227px;top:811px;width:778px;height:25px;background:#f7f7f7;"></div>
<div class="r" style="left:233px;top:815px;width:16px;height:14px;background:#ffffff;border:1px solid #c9c9c9;"></div>
<span class="t" style="left:345.32px;top:816.00px;font-size:13px;line-height:17px;letter-spacing:0.159px;color:#111;">16-01-2026</span>
<span class="t" style="left:454.82px;top:816.00px;font-size:13px;line-height:17px;letter-spacing:0.126px;color:#111;">(brak)</span>
<span class="t" style="left:566.02px;top:816.00px;font-size:13px;line-height:17px;letter-spacing:0.126px;color:#111;">(brak)</span>
<span class="t" style="left:676.23px;top:816.00px;font-size:13px;line-height:17px;letter-spacing:0.106px;color:#111;">14-01-20...</span>
<span class="t" style="left:749.62px;top:816.00px;font-size:13px;line-height:17px;letter-spacing:0.358px;color:#111;">9/2026</span>
<div class="r" style="left:233px;top:841px;width:16px;height:14px;background:#ffffff;border:1px solid #c9c9c9;"></div>
<span class="t" style="left:345.32px;top:842.00px;font-size:13px;line-height:17px;letter-spacing:0.159px;color:#111;">19-01-2026</span>
<span class="t" style="left:454.82px;top:842.00px;font-size:13px;line-height:17px;letter-spacing:0.126px;color:#111;">(brak)</span>
<span class="t" style="left:566.02px;top:842.00px;font-size:13px;line-height:17px;letter-spacing:0.126px;color:#111;">(brak)</span>
<span class="t" style="left:676.23px;top:842.00px;font-size:13px;line-height:17px;letter-spacing:0.106px;color:#111;">14-01-20...</span>
<span class="t" style="left:749.23px;top:842.00px;font-size:13px;line-height:17px;letter-spacing:0.436px;color:#111;">1/2026</span>
<div class="r" style="left:227px;top:861px;width:778px;height:26px;background:#f7f7f7;"></div>
<div class="r" style="left:233px;top:866px;width:16px;height:14px;background:#ffffff;border:1px solid #c9c9c9;"></div>
<span class="t" style="left:345.32px;top:867.00px;font-size:13px;line-height:17px;letter-spacing:0.159px;color:#111;">19-01-2026</span>
<span class="t" style="left:454.82px;top:867.00px;font-size:13px;line-height:17px;letter-spacing:0.126px;color:#111;">(brak)</span>
<span class="t" style="left:566.02px;top:867.00px;font-size:13px;line-height:17px;letter-spacing:0.126px;color:#111;">(brak)</span>
<span class="t" style="left:676.23px;top:867.00px;font-size:13px;line-height:17px;letter-spacing:0.106px;color:#111;">14-01-20...</span>
<span class="t" style="left:749.23px;top:867.00px;font-size:13px;line-height:17px;letter-spacing:0.436px;color:#111;">1/2026</span>
<div class="r" style="left:227px;top:912px;width:778px;height:25px;background:#f7f7f7;"></div>
<div class="r" style="left:227px;top:963px;width:778px;height:2px;background:#f7f7f7;"></div>
<div class="r" style="left:258.5px;top:280px;width:1px;height:607px;background-image:linear-gradient(#e2e2e2 50%,transparent 50%);background-size:1px 3px;"></div>
<svg style="left:236px;top:285.4px" width="14" height="12" viewBox="0 0 14 12"><path d="M1.6 6.2 L5 9.4 L12 2.2" fill="none" stroke="#1ba1e2" stroke-width="2.6"/></svg>
<svg style="left:260px;top:861px" width="9" height="8" viewBox="0 0 9 8"><path d="M0.2 0.4 H8.4 L0.2 7.6 Z" fill="#46b446"/></svg>
<svg style="left:942px;top:226px" width="16" height="16" viewBox="0 0 16 16"><path d="M0.9 0.5 H14.2 V1.6 L9.3 8 V14.9 L5.9 14.4 V8 L0.9 1.6 Z" fill="#4a4a4a"/></svg>
<svg style="left:969px;top:225px" width="18" height="17" viewBox="0 0 18 17"><g fill="none" stroke="#4a4a4a"><circle cx="9.7" cy="7.4" r="5.3" stroke-width="1.5"/><path d="M6.1 11.2 L1.6 15.4" stroke-width="2.1"/></g></svg>
<svg style="left:1000px;top:229px" width="11" height="9" viewBox="0 0 11 9"><path d="M0.6 1.9 H10.1 M0.6 4.8 H10.1 M0.6 7.6 H10.1" stroke="#7a7a7a" stroke-width="1.1" fill="none"/></svg>
<div class="r" style="left:927px;top:226px;width:3px;height:15px;background:#484848;"></div>
<span class="t" style="left:260.66px;top:1006.00px;font-size:13px;line-height:17px;letter-spacing:0.112px;color:#333;">Dokumentów: 1 z 24</span>
<div class="r" style="left:766px;top:996px;width:222px;height:35px;background:#1ba1e2;border-radius:2px;"></div>
<span class="t" style="left:778.80px;top:1003.50px;font-size:15px;line-height:20px;letter-spacing:0.198px;color:#fff;font-weight:bold;">WPROWADŹ DOKUMENTY</span>
<div class="r" style="left:1028px;top:83px;width:1px;height:972px;background:#8fcfef;"></div>
<div class="r" style="left:1029px;top:83px;width:1px;height:972px;background:#1ba1e2;"></div>
<div class="r" style="left:1030px;top:83px;width:1px;height:972px;background:#7cc7ee;"></div>
<div class="r" style="left:1031px;top:82px;width:888px;height:1px;background:#8fcfef;"></div>
<div class="r" style="left:1030px;top:83px;width:889px;height:49px;background:#1ba1e2;"></div>
<div class="r" style="left:1031px;top:132px;width:888px;height:43px;background:#f3f3f3;"></div>
<div class="r" style="left:1031px;top:175px;width:888px;height:1px;background:#d9d9d9;"></div>
<div class="r" style="left:1031px;top:176px;width:37px;height:879px;background:#f3f3f3;"></div>
<div class="r" style="left:1068px;top:176px;width:1px;height:837px;background:#e2e2e2;"></div>
<div class="r" style="left:1069px;top:176px;width:850px;height:837px;background:#ffffff;"></div>
<div class="r" style="left:1069px;top:1013px;width:850px;height:42px;background:#f3f3f3;"></div>
<span class="t" style="left:1432.03px;top:97.00px;font-size:13.4px;line-height:17px;letter-spacing:-0.138px;color:#fff;font-weight:bold;">FS 8 2026.pdf</span>
<svg style="left:0px;top:0px" width="1" height="1" viewBox="0 0 1 1"><g transform="translate(1335.2,154.4)"><path d="M-5.6 -3.7 A6.7 6.7 0 1 1 -6.4 2" fill="none" stroke="#1184bc" stroke-width="2"/><path d="M-8.6 -7.6 L-7.8 -1 L-1.6 -2.6 Z" fill="#1184bc"/></g><g transform="translate(1368.5,154.4) scale(-1,1)"><path d="M-5.6 -3.7 A6.7 6.7 0 1 1 -6.4 2" fill="none" stroke="#1184bc" stroke-width="2"/><path d="M-8.6 -7.6 L-7.8 -1 L-1.6 -2.6 Z" fill="#1184bc"/></g></svg>
<svg style="left:1391px;top:145px" width="21" height="18" viewBox="0 0 21 18"><g fill="#1184bc"><rect x="9.1" y="1.2" width="2.6" height="15.6"/><path d="M1.2 9.1 L6.9 4.2 V14 Z"/><path d="M19.6 9.1 L13.9 4.2 V14 Z"/></g></svg>
<svg style="left:1475px;top:145px" width="18" height="18" viewBox="0 0 18 18"><g fill="none" stroke="#1184bc" stroke-width="1.7"><circle cx="8.8" cy="9.3" r="7"/><path d="M4.8 9.3 H12.8 M8.8 5.3 V13.3" stroke-width="2.4"/></g></svg>
<svg style="left:1508px;top:145px" width="18" height="18" viewBox="0 0 18 18"><g fill="none" stroke="#1184bc" stroke-width="1.7"><circle cx="8.7" cy="9.3" r="7"/><path d="M4.7 9.3 H12.7" stroke-width="2.4"/></g></svg>
<svg style="left:1541px;top:145px" width="19" height="18" viewBox="0 0 19 18"><g transform="translate(18.6,0) scale(-1,1)"><g fill="none" stroke="#1184bc" stroke-width="2"><path d="M3 7.4 A6.4 6.4 0 0 1 14.4 5.4"/><path d="M15.2 11.2 A6.4 6.4 0 0 1 3.8 13.2"/></g><g fill="#1184bc"><path d="M17.2 1.6 L17 8.6 L10.4 6.8 Z"/><path d="M1 17 L1.2 10 L7.8 11.8 Z"/></g></g></svg>
<svg style="left:1574px;top:145px" width="19" height="18" viewBox="0 0 19 18"><g fill="none" stroke="#1184bc" stroke-width="1.5"><path d="M1.9 16.8 V4.6 Q1.9 1.9 4.6 1.9 H13.4 Q16.1 1.9 16.1 4.6 V16.8"/></g><g fill="#1184bc"><rect x="7.9" y="7" width="2.2" height="6.6"/><path d="M9 4.6 L12.2 8.4 H5.8 Z"/><path d="M9 16 L12.2 12.2 H5.8 Z"/></g></svg>
<div class="r" style="left:1606px;top:144px;width:20px;height:20px;background:#c4dde9;"></div>
<svg style="left:1607px;top:145px" width="19" height="18" viewBox="0 0 19 18"><g fill="none" stroke="#585858" stroke-width="1.5"><path d="M1.6 16.8 V4.7 Q1.6 2 4.3 2 H13.2 Q15.9 2 15.9 4.7 V16.8"/></g><g fill="#4a4a4a"><rect x="5.6" y="9.7" width="6.4" height="2"/><path d="M2.9 10.7 L6.7 8.1 V13.3 Z"/><path d="M14.9 10.7 L11.1 8.1 V13.3 Z"/></g></svg>
<svg style="left:1040px;top:206px" width="22" height="23" viewBox="0 0 22 23"><g fill="none" stroke="#555" stroke-width="1.8"><path d="M7.9 20.8 H3.3 Q1.3 20.8 1.3 18.8 V3.2 Q1.3 1.2 3.3 1.2 H11.9 L17.2 6.9 V10.2"/><path d="M5.2 11.5 H12.5 M5.2 15.5 H9.9" stroke-width="1.6"/><path d="M10.4 20.3 L18.8 13.2" stroke-width="2.7"/></g><path d="M11.4 1.2 L17.6 7.4 H11.4 Z" fill="#555"/></svg>
<svg style="left:1038px;top:252px" width="23" height="22" viewBox="0 0 23 22"><g fill="none" stroke="#4d4d4d" stroke-width="2"><path d="M1.3 1.4 H15.9 V10.6 H1.3 Z"/><path d="M21.2 5.3 V16 M5.9 15.3 H21.2"/></g><g fill="#4d4d4d"><path d="M0.3 10.6 V16 L5.8 10.6 Z"/><path d="M15.6 15.3 L22.2 21 V15.3 Z"/></g></svg>
<svg style="left:1036px;top:298px" width="23" height="23" viewBox="0 0 23 23"><g fill="none" stroke="#a8a8a8" stroke-width="1.7"><path d="M5.9 11.4 V1.8 H15.2 L20.5 7.1 V20.3 H11.9"/><path d="M1.3 17.7 L5.3 21.7 L13.2 12.4"/><path d="M9.8 7.8 H12.4 M14 7.8 H17 M11.8 11.6 H14.6 M15.2 15.6 H17.8" stroke-width="1.5"/></g><path d="M14.8 1.8 L20.9 7.9 H14.8 Z" fill="#a8a8a8"/></svg>
<svg style="left:1486px;top:1026px" width="18" height="18" viewBox="0 0 18 18"><g fill="none" stroke="#1787c0" stroke-width="2.4"><circle cx="6.8" cy="6.6" r="4.7"/><path d="M10.4 10.2 L15.4 15.2" stroke-width="3"/></g></svg>
<span class="t" style="left:1900.10px;top:1038.00px;font-size:12.5px;line-height:16px;color:#111;transform:scaleX(1.1873);transform-origin:0 0;">+/-</span>
<span class="t" style="left:1132.28px;top:205.00px;font-size:14.01px;line-height:18px;color:#111;">PHU Chłodnik</span>
<span class="t" style="left:1132.28px;top:221.00px;font-size:13.97px;line-height:18px;color:#111;">Bławatkowa 25/3, 54-445 Wrocław</span>
<span class="t" style="left:1133.12px;top:238.00px;font-size:14.21px;line-height:18px;color:#111;">Tel.: 354-65-89, NIP:</span>
<span class="t" style="left:1132.24px;top:253.50px;font-size:14.55px;line-height:19px;color:#111;">Bank Testowy,</span>
<div class="r" style="left:1264.5px;top:241px;width:94px;height:16px;background:#fdfdfd;overflow:hidden;"><div style="position:absolute;left:8.5px;top:3.8px;width:71.0px;height:8.0px;background:#c4c4c4;filter:blur(3.5px);border-radius:6px;"></div></div>
<div class="r" style="left:1128.8px;top:269.2px;width:215px;height:26.5px;background:#f3f3f3;overflow:hidden;"><div style="position:absolute;left:8.5px;top:6.4px;width:192.0px;height:13.2px;background:#c4c4c4;filter:blur(3.5px);border-radius:6px;"></div></div>
<div class="r" style="left:1623px;top:197.00px;width:270.00px;height:1.2px;background:#111;"></div>
<div class="r" style="left:1623.3px;top:198.6px;width:268.7px;height:17.2px;background:#dcdcdc;"></div>
<span class="t" style="left:1690.17px;top:197.50px;font-size:14.48px;line-height:19px;color:#111;">Miejsce wystawienia:</span>
<span class="t" style="left:1730.91px;top:219.00px;font-size:14.13px;line-height:18px;color:#111;">Wrocław</span>
<div class="r" style="left:1623px;top:240.30px;width:270.00px;height:1.6px;background:#111;"></div>
<div class="r" style="left:1623.3px;top:242.3px;width:268.7px;height:16.7px;background:#dcdcdc;"></div>
<span class="t" style="left:1653.22px;top:241.50px;font-size:14.36px;line-height:19px;color:#111;">Data zakończenia dostawy/usług</span>
<span class="t" style="left:1721.88px;top:261.50px;font-size:14.38px;line-height:19px;color:#111;">14.01.2026</span>
<div class="r" style="left:1623px;top:288.40px;width:270.00px;height:1.6px;background:#111;"></div>
<div class="r" style="left:1623.3px;top:290.4px;width:268.7px;height:16.4px;background:#dcdcdc;"></div>
<span class="t" style="left:1699.38px;top:289.50px;font-size:14.49px;line-height:19px;color:#111;">Data wystawienia:</span>
<span class="t" style="left:1721.88px;top:309.50px;font-size:14.38px;line-height:19px;color:#111;">14.01.2026</span>
<div class="r" style="left:1623px;top:331.90px;width:270.00px;height:1px;background:#8a8a8a;"></div>
<div class="r" style="left:1125px;top:372.65px;width:360.20px;height:1.3px;background:#111;"></div>
<div class="r" style="left:1126px;top:374.6px;width:358.2px;height:16.7px;background:#dcdcdc;"></div>
<span class="t" style="left:1265.69px;top:373.00px;font-size:13.85px;line-height:18px;color:#111;">Sprzedawca:</span>
<span class="t" style="left:1125.18px;top:390.00px;font-size:14.01px;line-height:18px;color:#111;">PHU Chłodnik</span>
<span class="t" style="left:1125.18px;top:409.00px;font-size:14.06px;line-height:18px;color:#111;">Bławatkowa 25/3</span>
<span class="t" style="left:1125.74px;top:425.00px;font-size:13.95px;line-height:18px;color:#111;">54-445 Wrocław</span>
<span class="t" style="left:1125.11px;top:439.50px;font-size:14.87px;line-height:19px;color:#111;">NIP:</span>
<div class="r" style="left:1154.8px;top:441.3px;width:97px;height:17px;background:#fbfbfb;overflow:hidden;"><div style="position:absolute;left:8.5px;top:4.1px;width:74.0px;height:8.5px;background:#c4c4c4;filter:blur(3.5px);border-radius:6px;"></div></div>
<div class="r" style="left:1124.2px;top:460.00px;width:359.30px;height:1px;background:#222;"></div>
<div class="r" style="left:1533.2px;top:372.65px;width:360.00px;height:1.3px;background:#111;"></div>
<div class="r" style="left:1534px;top:374.6px;width:358.1px;height:16.7px;background:#dcdcdc;"></div>
<span class="t" style="left:1682.16px;top:373.00px;font-size:14.08px;line-height:18px;color:#111;">Nabywca:</span>
<span class="t" style="left:1534.00px;top:390.00px;font-size:14.03px;line-height:18px;color:#111;">AD-MAR s.c.</span>
<span class="t" style="left:1532.87px;top:409.00px;font-size:14.08px;line-height:18px;color:#111;">Romanowskiego 23</span>
<span class="t" style="left:1533.68px;top:425.00px;font-size:14.0px;line-height:18px;color:#111;">46-020 Bierkowice</span>
<span class="t" style="left:1532.81px;top:439.50px;font-size:14.82px;line-height:19px;color:#111;">NIP:</span>
<div class="r" style="left:1561.7px;top:441.3px;width:86.5px;height:17px;background:#f4f4f4;overflow:hidden;"><div style="position:absolute;left:8.5px;top:4.1px;width:63.5px;height:8.5px;background:#c4c4c4;filter:blur(3.5px);border-radius:6px;"></div></div>
<div class="r" style="left:1533.2px;top:460.00px;width:359.80px;height:1px;background:#222;"></div>
<span class="t" style="left:1376.24px;top:478.00px;font-size:20.74px;line-height:27px;color:#111;white-space:pre;">Faktura VAT  8/2026 oryginał</span>
<div class="r" style="left:1124.4px;top:524.8px;width:766px;height:43.4px;background:#dcdcdc;"></div>
<div class="r" style="left:1123.90px;top:524.8px;width:1px;height:108.40px;background:#333;"></div>
<div class="r" style="left:1152.90px;top:524.8px;width:1px;height:108.40px;background:#333;"></div>
<div class="r" style="left:1349.00px;top:524.8px;width:1px;height:108.40px;background:#333;"></div>
<div class="r" style="left:1443.20px;top:524.8px;width:1px;height:108.40px;background:#333;"></div>
<div class="r" style="left:1508.50px;top:524.8px;width:1px;height:108.40px;background:#333;"></div>
<div class="r" style="left:1537.00px;top:524.8px;width:1px;height:108.40px;background:#333;"></div>
<div class="r" style="left:1614.80px;top:524.8px;width:1px;height:108.40px;background:#333;"></div>
<div class="r" style="left:1647.90px;top:524.8px;width:1px;height:108.40px;background:#333;"></div>
<div class="r" style="left:1729.80px;top:524.8px;width:1px;height:108.40px;background:#333;"></div>
<div class="r" style="left:1807.40px;top:524.8px;width:1px;height:108.40px;background:#333;"></div>
<div class="r" style="left:1889.90px;top:524.8px;width:1px;height:108.40px;background:#333;"></div>
<div class="r" style="left:1124.4px;top:524.30px;width:766.00px;height:1px;background:#777;"></div>
<div class="r" style="left:1124.4px;top:567.70px;width:766.50px;height:1px;background:#333;"></div>
<div class="r" style="left:1124.4px;top:590.00px;width:766.50px;height:1px;background:#333;"></div>
<div class="r" style="left:1124.4px;top:611.00px;width:766.50px;height:1px;background:#333;"></div>
<div class="r" style="left:1124.4px;top:632.70px;width:766.50px;height:1px;background:#333;"></div>
<span class="t" style="left:1132.00px;top:525.00px;font-size:12px;line-height:16px;color:#111;">Lp</span>
<span class="t" style="left:1232.44px;top:525.00px;font-size:12.02px;line-height:16px;color:#111;">Nazwa</span>
<span class="t" style="left:1353.72px;top:525.00px;font-size:12.18px;line-height:16px;color:#111;">Kod CN/PKWiU</span>
<span class="t" style="left:1463.56px;top:525.00px;font-size:12.11px;line-height:16px;color:#111;">Ilość</span>
<span class="t" style="left:1514.26px;top:525.00px;font-size:12.1px;line-height:16px;color:#111;">j.m.</span>
<span class="t" style="left:1560.44px;top:525.00px;font-size:12px;line-height:16px;color:#111;">Cena</span>
<span class="t" style="left:1541.66px;top:538.00px;font-size:11.94px;line-height:16px;color:#111;">jednostkowa</span>
<span class="t" style="left:1562.52px;top:552.00px;font-size:12px;line-height:16px;color:#111;">netto</span>
<span class="t" style="left:1619.63px;top:525.00px;font-size:12px;line-height:16px;color:#111;">VAT</span>
<span class="t" style="left:1623.03px;top:538.00px;font-size:12px;line-height:16px;color:#111;">[%]</span>
<span class="t" style="left:1652.78px;top:525.00px;font-size:12.12px;line-height:16px;color:#111;">Wartość netto</span>
<span class="t" style="left:1738.30px;top:525.00px;font-size:12.46px;line-height:16px;color:#111;">Kwota VAT</span>
<span class="t" style="left:1810.61px;top:525.00px;font-size:12.1px;line-height:16px;color:#111;">Wartość brutto</span>
<span class="t" style="left:1135.11px;top:571.00px;font-size:12px;line-height:16px;color:#111;">1</span>
<span class="t" style="left:1154.23px;top:571.00px;font-size:12.13px;line-height:16px;color:#111;">Dezodorant 100ml</span>
<span class="t" style="left:1477.32px;top:571.00px;font-size:12px;line-height:16px;color:#111;">5,000</span>
<span class="t" style="left:1513.85px;top:570.00px;font-size:12.87px;line-height:17px;color:#111;">szt.</span>
<span class="t" style="left:1584.02px;top:571.00px;font-size:12px;line-height:16px;color:#111;">42,00</span>
<span class="t" style="left:1625.20px;top:571.00px;font-size:12px;line-height:16px;color:#111;">23</span>
<span class="t" style="left:1691.96px;top:571.00px;font-size:12px;line-height:16px;color:#111;">210,00</span>
<span class="t" style="left:1776.42px;top:571.00px;font-size:12px;line-height:16px;color:#111;">48,30</span>
<span class="t" style="left:1852.46px;top:571.00px;font-size:12px;line-height:16px;color:#111;">258,30</span>
<span class="t" style="left:1135.25px;top:592.00px;font-size:12px;line-height:16px;color:#111;">2</span>
<span class="t" style="left:1154.23px;top:592.00px;font-size:12.12px;line-height:16px;color:#111;">Black Tiger woda toaletowa 150ml</span>
<span class="t" style="left:1477.32px;top:592.00px;font-size:12px;line-height:16px;color:#111;">3,000</span>
<span class="t" style="left:1513.85px;top:591.00px;font-size:12.87px;line-height:17px;color:#111;">szt.</span>
<span class="t" style="left:1584.02px;top:592.00px;font-size:12px;line-height:16px;color:#111;">16,00</span>
<span class="t" style="left:1625.20px;top:592.00px;font-size:12px;line-height:16px;color:#111;">23</span>
<span class="t" style="left:1698.62px;top:592.00px;font-size:12px;line-height:16px;color:#111;">48,00</span>
<span class="t" style="left:1777.20px;top:592.00px;font-size:12px;line-height:16px;color:#111;">11,04</span>
<span class="t" style="left:1859.00px;top:592.00px;font-size:12px;line-height:16px;color:#111;">59,04</span>
<span class="t" style="left:1135.30px;top:614.00px;font-size:12px;line-height:16px;color:#111;">3</span>
<span class="t" style="left:1154.24px;top:614.00px;font-size:12.04px;line-height:16px;color:#111;">Dostawa</span>
<span class="t" style="left:1477.32px;top:614.00px;font-size:12px;line-height:16px;color:#111;">1,000</span>
<span class="t" style="left:1513.85px;top:613.00px;font-size:12.87px;line-height:17px;color:#111;">szt.</span>
<span class="t" style="left:1584.02px;top:614.00px;font-size:12px;line-height:16px;color:#111;">21,00</span>
<span class="t" style="left:1625.20px;top:614.00px;font-size:12px;line-height:16px;color:#111;">23</span>
<span class="t" style="left:1698.62px;top:614.00px;font-size:12px;line-height:16px;color:#111;">21,00</span>
<span class="t" style="left:1783.17px;top:614.00px;font-size:12px;line-height:16px;color:#111;">4,83</span>
<span class="t" style="left:1859.18px;top:614.00px;font-size:12px;line-height:16px;color:#111;">25,83</span>
<div class="r" style="left:1410.4px;top:647.3px;width:478.9px;height:20.6px;background:#dcdcdc;"></div>
<div class="r" style="left:1409.90px;top:647.3px;width:1px;height:42.70px;background:#222;"></div>
<div class="r" style="left:1888.80px;top:647.3px;width:1px;height:42.70px;background:#222;"></div>
<div class="r" style="left:1631.40px;top:647.3px;width:1px;height:42.70px;background:#555;"></div>
<div class="r" style="left:1716.90px;top:647.3px;width:1px;height:42.70px;background:#555;"></div>
<div class="r" style="left:1802.80px;top:647.3px;width:1px;height:42.70px;background:#555;"></div>
<div class="r" style="left:1410.4px;top:646.80px;width:478.90px;height:1px;background:#555;"></div>
<div class="r" style="left:1410.4px;top:667.40px;width:478.90px;height:1px;background:#555;"></div>
<div class="r" style="left:1410.4px;top:689.50px;width:479.40px;height:1px;background:#222;"></div>
<span class="t" style="left:1470.89px;top:649.00px;font-size:12.11px;line-height:16px;color:#111;">według stawki VAT</span>
<span class="t" style="left:1639.67px;top:649.00px;font-size:12.0px;line-height:16px;color:#111;">wartość netto</span>
<span class="t" style="left:1732.20px;top:649.00px;font-size:12.39px;line-height:16px;color:#111;">kwota VAT</span>
<span class="t" style="left:1809.14px;top:649.00px;font-size:12.01px;line-height:16px;color:#111;">wartość brutto</span>
<span class="t" style="left:1412.02px;top:669.00px;font-size:12.2px;line-height:16px;color:#111;">Podstawowy podatek VAT 23%</span>
<span class="t" style="left:1679.26px;top:669.00px;font-size:12.1px;line-height:16px;color:#111;">279,00</span>
<span class="t" style="left:1771.59px;top:669.00px;font-size:12.1px;line-height:16px;color:#111;">64,17</span>
<span class="t" style="left:1850.28px;top:669.00px;font-size:12.1px;line-height:16px;color:#111;">343,17</span>
<span class="t" style="left:1679.26px;top:691.00px;font-size:12.1px;line-height:16px;color:#111;">279,00</span>
<span class="t" style="left:1771.59px;top:691.00px;font-size:12.1px;line-height:16px;color:#111;">64,17</span>
<span class="t" style="left:1850.28px;top:691.00px;font-size:12.1px;line-height:16px;color:#111;">343,17</span>
<span class="t" style="left:1545.41px;top:691.00px;font-size:12.34px;line-height:16px;color:#111;">Razem:</span>
<span class="t" style="left:1125.20px;top:717.50px;font-size:14.45px;line-height:19px;color:#111;font-weight:bold;">Zapłacono gotówką:</span>
<span class="t" style="left:1292.36px;top:717.50px;font-size:14.5px;line-height:19px;color:#111;">343,17</span>
<div class="r" style="left:1488.6px;top:719.40px;width:402.50px;height:1.6px;background:#111;"></div>
<div class="r" style="left:1489.4px;top:721.4px;width:401.4px;height:24.8px;background:#dcdcdc;"></div>
<span class="t" style="left:1488.78px;top:721.00px;font-size:17.24px;line-height:22px;color:#111;font-weight:bold;">Razem do zapłaty:</span>
<span class="t" style="left:1839.21px;top:721.50px;font-size:16.98px;line-height:22px;color:#111;font-weight:bold;">343,17</span>
<span class="t" style="left:1488.20px;top:746.50px;font-size:14.37px;line-height:19px;color:#111;font-weight:bold;">Słownie:</span>
<span class="t" style="left:1565.29px;top:746.50px;font-size:14.3px;line-height:19px;color:#111;white-space:pre;">trzysta czterdzieści trzy  PLN 17/100</span>
<div class="r" style="left:1487.5px;top:773.40px;width:403.10px;height:1.6px;background:#111;"></div>
<div class="r" style="left:1125.1px;top:807px;width:338.9px;height:111px;border:1px solid #666;border-bottom-color:#222;box-sizing:border-box;"></div>
<div class="r" style="left:1129px;top:811.6px;width:329.9000000000001px;height:17.2px;background:#dcdcdc;"></div>
<span class="t" style="left:1252.59px;top:811.50px;font-size:14.55px;line-height:19px;color:#111;font-weight:bold;">Wystawił(a):</span>
<span class="t" style="left:1279.24px;top:831.50px;font-size:14.61px;line-height:19px;color:#111;">Szef</span>
<span class="t" style="left:1170.49px;top:917.00px;font-size:10.08px;line-height:13px;color:#111;">Podpis osoby upoważnionej do wystawienia faktury VAT</span>
<div class="r" style="left:1554.9px;top:807px;width:338.5px;height:111px;border:1px solid #666;border-bottom-color:#222;box-sizing:border-box;"></div>
<div class="r" style="left:1559.2px;top:811.6px;width:330.0px;height:17.2px;background:#dcdcdc;"></div>
<span class="t" style="left:1686.06px;top:811.50px;font-size:14.53px;line-height:19px;color:#111;font-weight:bold;">Odebrał(a):</span>
<span class="t" style="left:1670.82px;top:831.50px;font-size:14.25px;line-height:19px;color:#111;">Janina Herbuska</span>
<span class="t" style="left:1612.19px;top:917.00px;font-size:10.1px;line-height:13px;color:#111;">Podpis osoby upoważnionej do odbioru faktury VAT</span>
<div class="r" style="left:481px;top:83px;width:446px;height:639px;background:#fff;border:1px solid #22a0e0;box-sizing:border-box;box-shadow:2px 2px 3px rgba(0,0,0,0.5);"></div>
<div class="r" style="left:522px;top:210px;width:391px;height:1px;background:#e1e1e1;"></div>
<div class="r" style="left:522px;top:346px;width:391px;height:1px;background:#e1e1e1;"></div>
<div class="r" style="left:522px;top:402px;width:391px;height:1px;background:#e1e1e1;"></div>
<div class="r" style="left:522px;top:482px;width:391px;height:1px;background:#e1e1e1;"></div>
<div class="r" style="left:522px;top:563px;width:391px;height:1px;background:#e1e1e1;"></div>
<div class="r" style="left:522px;top:619px;width:391px;height:1px;background:#e1e1e1;"></div>
<span class="t" style="left:520.66px;top:90.00px;font-size:13px;line-height:17px;color:#111;">KPiR</span>
<svg style="left:907px;top:94.4px" width="8" height="9" viewBox="0 0 8 9"><path d="M2 1.2 L5.7 4.6 L2 8" fill="none" stroke="#222" stroke-width="1.4"/></svg>
<svg style="left:492.6px;top:89.3px" width="15" height="15" viewBox="0 0 15 15"><path d="M7.4 0.2 V14.6 M0.2 7.4 H14.6" stroke="#108010" stroke-width="3.2" fill="none"/></svg>
<span class="t" style="left:521.12px;top:114.00px;font-size:13px;line-height:17px;letter-spacing:-0.338px;color:#111;">Sprzedaż VAT</span>
<svg style="left:907px;top:118.4px" width="8" height="9" viewBox="0 0 8 9"><path d="M2 1.2 L5.7 4.6 L2 8" fill="none" stroke="#222" stroke-width="1.4"/></svg>
<svg style="left:492.6px;top:113.3px" width="15" height="15" viewBox="0 0 15 15"><path d="M7.4 0.2 V14.6 M0.2 7.4 H14.6" stroke="#108010" stroke-width="3.2" fill="none"/></svg>
<span class="t" style="left:521.12px;top:138.00px;font-size:13px;line-height:17px;letter-spacing:-0.416px;color:#111;">Sprzedaż VAT OSS</span>
<svg style="left:907px;top:142.4px" width="8" height="9" viewBox="0 0 8 9"><path d="M2 1.2 L5.7 4.6 L2 8" fill="none" stroke="#222" stroke-width="1.4"/></svg>
<svg style="left:492.6px;top:137.29999999999998px" width="15" height="15" viewBox="0 0 15 15"><path d="M7.4 0.2 V14.6 M0.2 7.4 H14.6" stroke="#108010" stroke-width="3.2" fill="none"/></svg>
<span class="t" style="left:521.31px;top:162.00px;font-size:13px;line-height:17px;letter-spacing:-0.179px;color:#111;">Zakup VAT</span>
<svg style="left:907px;top:166.4px" width="8" height="9" viewBox="0 0 8 9"><path d="M2 1.2 L5.7 4.6 L2 8" fill="none" stroke="#222" stroke-width="1.4"/></svg>
<svg style="left:492.6px;top:161.29999999999998px" width="15" height="15" viewBox="0 0 15 15"><path d="M7.4 0.2 V14.6 M0.2 7.4 H14.6" stroke="#108010" stroke-width="3.2" fill="none"/></svg>
<span class="t" style="left:520.66px;top:187.00px;font-size:13px;line-height:17px;letter-spacing:-0.196px;color:#111;">Powiąż z</span>
<svg style="left:907px;top:191.4px" width="8" height="9" viewBox="0 0 8 9"><path d="M2 1.2 L5.7 4.6 L2 8" fill="none" stroke="#222" stroke-width="1.4"/></svg>
<span class="t" style="left:520.66px;top:218.00px;font-size:13px;line-height:17px;letter-spacing:0.299px;color:#111;">Dekretuj</span>
<span class="t" style="left:828.85px;top:218.00px;font-size:13px;line-height:17px;letter-spacing:0.265px;color:#111;">Ctrl+Shift+R</span>
<span class="t" style="left:520.66px;top:243.00px;font-size:13px;line-height:17px;letter-spacing:0.146px;color:#111;">Dekretuj automatycznie</span>
<svg style="left:907px;top:247.4px" width="8" height="9" viewBox="0 0 8 9"><path d="M2 1.2 L5.7 4.6 L2 8" fill="none" stroke="#222" stroke-width="1.4"/></svg>
<span class="t" style="left:521.67px;top:267.00px;font-size:13px;line-height:17px;letter-spacing:0.053px;color:#111;">Wycofaj dekretację</span>
<span class="t" style="left:828.85px;top:267.00px;font-size:13px;line-height:17px;letter-spacing:0.231px;color:#111;">Ctrl+Delete</span>
<span class="t" style="left:520.66px;top:298.00px;font-size:13px;line-height:17px;letter-spacing:-0.023px;color:#111;">Przypisz schemat dekretacji</span>
<span class="t" style="left:521.70px;top:322.00px;font-size:13px;line-height:17px;letter-spacing:0.089px;color:#111;">Automatyczny wybór schematu dekretacji</span>
<span class="t" style="left:520.73px;top:355.00px;font-size:13px;line-height:17px;letter-spacing:0.144px;color:#111;">Usuń</span>
<span class="t" style="left:828.46px;top:355.00px;font-size:13px;line-height:17px;letter-spacing:0.245px;color:#111;">Delete</span>
<svg style="left:493px;top:354px" width="14" height="17" viewBox="0 0 14 17"><g fill="#0c82ba"><rect x="4.4" y="0.8" width="4.7" height="1.6"/><rect x="0.7" y="2" width="12.2" height="2.1"/><path d="M1.1 5 H11.9 V15 Q11.9 16 10.9 16 H2.1 Q1.1 16 1.1 15 Z"/></g><g fill="#fff"><rect x="3.9" y="6" width="1.6" height="8"/><rect x="8.2" y="6" width="1.6" height="8"/></g></svg>
<span class="t" style="left:520.66px;top:378.00px;font-size:13px;line-height:17px;letter-spacing:0.177px;color:#111;">Przywróć do obiegu</span>
<span class="t" style="left:828.85px;top:378.00px;font-size:13px;line-height:17px;letter-spacing:0.267px;color:#111;">Ctrl+B</span>
<span class="t" style="left:521.31px;top:411.00px;font-size:13px;line-height:17px;letter-spacing:0.028px;color:#111;">Zmień status przetworzenia</span>
<svg style="left:907px;top:415.4px" width="8" height="9" viewBox="0 0 8 9"><path d="M2 1.2 L5.7 4.6 L2 8" fill="none" stroke="#222" stroke-width="1.4"/></svg>
<span class="t" style="left:520.66px;top:435.00px;font-size:13px;line-height:17px;letter-spacing:0.180px;color:#111;">Nie podlega księgowaniu</span>
<span class="t" style="left:828.85px;top:435.00px;font-size:13px;line-height:17px;letter-spacing:0.595px;color:#111;">Ctrl+N</span>
<span class="t" style="left:521.05px;top:458.00px;font-size:13px;line-height:17px;letter-spacing:0.177px;color:#111;">Cofnij - Nie podlega księgowaniu</span>
<span class="t" style="left:520.66px;top:490.00px;font-size:13px;line-height:17px;letter-spacing:0.176px;color:#111;">Nadaj zbiorczo grupę</span>
<span class="t" style="left:828.85px;top:490.00px;font-size:13px;line-height:17px;letter-spacing:0.370px;color:#111;">Ctrl+Alt+K</span>
<span class="t" style="left:520.66px;top:514.00px;font-size:13px;line-height:17px;letter-spacing:0.203px;color:#111;">Nadaj zbiorczo typ dokumentu do dekretacji</span>
<span class="t" style="left:828.85px;top:514.00px;font-size:13px;line-height:17px;letter-spacing:0.323px;color:#111;">Ctrl+Alt+T</span>
<span class="t" style="left:520.66px;top:539.00px;font-size:13px;line-height:17px;letter-spacing:0.111px;color:#111;">Nadaj zbiorczo etykiety księgowe</span>
<span class="t" style="left:828.85px;top:539.00px;font-size:13px;line-height:17px;letter-spacing:0.273px;color:#111;">Ctrl+Alt+E</span>
<span class="t" style="left:521.12px;top:572.00px;font-size:13px;line-height:17px;letter-spacing:0.405px;color:#111;">Otwórz</span>
<span class="t" style="left:828.46px;top:572.00px;font-size:13px;line-height:17px;letter-spacing:-1.053px;color:#111;">F3</span>
<svg style="left:491px;top:570px" width="17" height="17" viewBox="0 0 17 17"><g fill="none" stroke="#0c82ba"><circle cx="7.35" cy="7.5" r="5.45" stroke-width="2"/><path d="M11.2 11.4 L14.6 15" stroke-width="3"/></g></svg>
<span class="t" style="left:520.66px;top:595.00px;font-size:13px;line-height:17px;letter-spacing:-0.026px;color:#111;">Pokaż zaksięgowane dokumenty</span>
<span class="t" style="left:828.85px;top:595.00px;font-size:13px;line-height:17px;letter-spacing:0.358px;color:#111;">Ctrl+Z</span>
<span class="t" style="left:520.66px;top:627.00px;font-size:13px;line-height:17px;letter-spacing:0.150px;color:#111;">Dokumenty powiązane</span>
<span class="t" style="left:828.85px;top:627.00px;font-size:13px;line-height:17px;letter-spacing:0.041px;color:#111;">Ctrl+E</span>
<span class="t" style="left:520.66px;top:652.00px;font-size:13px;line-height:17px;letter-spacing:0.529px;color:#111;">Drukuj</span>
<span class="t" style="left:828.85px;top:652.00px;font-size:13px;line-height:17px;letter-spacing:0.267px;color:#111;">Ctrl+P</span>
<svg style="left:491px;top:651px" width="18" height="17" viewBox="0 0 18 17"><g fill="#0c82ba"><rect x="1" y="6.1" width="15.3" height="7.9" rx="1.4"/></g><rect x="4.5" y="1.4" width="8" height="6" fill="#fff" stroke="#0c82ba" stroke-width="1"/><rect x="4.5" y="12.7" width="8" height="2.9" fill="#fff" stroke="#0c82ba" stroke-width="1"/><rect x="5" y="9.2" width="3" height="0.9" fill="#a9d6ea"/></svg>
<span class="t" style="left:521.67px;top:676.00px;font-size:13px;line-height:17px;letter-spacing:0.115px;color:#111;">Wyślij e-mailem</span>
<span class="t" style="left:521.31px;top:700.00px;font-size:13px;line-height:17px;letter-spacing:-0.196px;color:#111;">Zapisz</span>
<svg style="left:907px;top:704.4px" width="8" height="9" viewBox="0 0 8 9"><path d="M2 1.2 L5.7 4.6 L2 8" fill="none" stroke="#222" stroke-width="1.4"/></svg>
<div class="r" style="left:482.5px;top:82.1px;width:445px;height:209.5px;border:2.2px solid #f4000c;border-radius:7px;box-sizing:border-box;box-shadow:0 1px 4px rgba(0,0,0,0.30), inset 0 0 6px rgba(0,0,0,0.42);"></div>
<div class="r" style="left:482.5px;top:431.6px;width:445px;height:104.3px;border:2.2px solid #f4000c;border-radius:7px;box-sizing:border-box;box-shadow:0 1px 4px rgba(0,0,0,0.30), inset 0 0 6px rgba(0,0,0,0.42);"></div>
<div class="r" style="left:482.5px;top:588.4px;width:445px;height:60.4px;border:2.2px solid #f4000c;border-radius:7px;box-sizing:border-box;box-shadow:0 1px 4px rgba(0,0,0,0.30), inset 0 0 6px rgba(0,0,0,0.42);"></div>
</body></html>
